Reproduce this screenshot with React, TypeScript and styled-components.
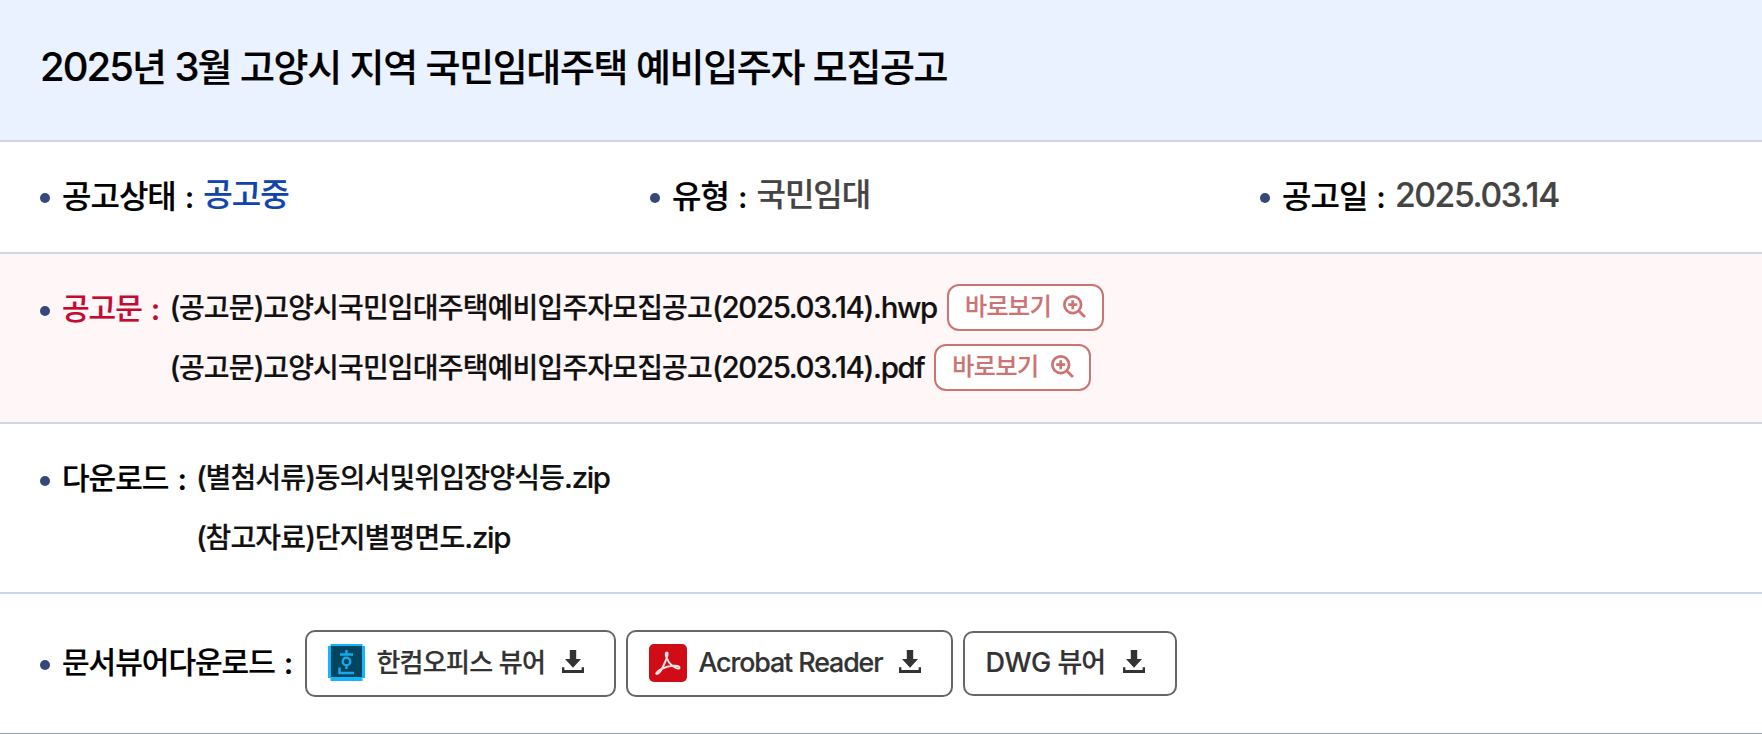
import { ReactNode } from "react";
import styled, { createGlobalStyle, css } from "styled-components";

const GlobalStyle = createGlobalStyle`
    * {
        box-sizing: border-box;
    }
    body {
        margin: 0;
        overflow: hidden;
        background: #fff;
        font-family: Inter, "Noto Sans CJK KR", sans-serif;
        font-weight: 500;
        color: #000;
    }
`;

const Notice = styled.main`
    width: 100%;
    height: 734px;
    border-bottom: 1px solid #8f9fb8;
`;

const TitleBar = styled.header`
    display: flex;
    align-items: center;
    height: 142px;
    padding: 0 40px 6px;
    background: #eaf1ff;
    border-bottom: 2px solid #cbd7e8;
`;

const Row = styled.section<{ $height: number; $tinted?: boolean; $last?: boolean }>`
    display: flex;
    align-items: flex-start;
    height: ${(p) => p.$height}px;
    padding-left: 40px;
    background: ${(p) => (p.$tinted ? "#fff6f7" : "#fff")};
    border-bottom: ${(p) => (p.$last ? "none" : "2px solid #cbd7e8")};
`;

const Field = styled.div`
    display: flex;
    align-items: center;
    flex: 0 0 610px;
    height: 110px;

    &:last-child {
        flex: 1 1 0;
    }
`;

const Bullet = styled.i<{ $top?: number }>`
    flex: none;
    width: 10px;
    height: 10px;
    margin: ${(p) => p.$top ?? 0}px 12px 0 0;
    border-radius: 50%;
    background: #34487c;
`;

/* 한글과 영문/숫자의 크기와 자간을 따로 준다 */
type TextStyle = "title" | "field" | "label" | "file" | "view" | "viewer" | "dwg";

const sizes: Record<TextStyle, { size: number; ko: number; en: number; enScale: number }> = {
    title: { size: 38, ko: -1.35, en: -1.9, enScale: 1.05 },
    field: { size: 32, ko: -1, en: -1.35, enScale: 1.05 },
    label: { size: 30, ko: -1, en: -1, enScale: 1 },
    file: { size: 28, ko: -0.83, en: -1.32, enScale: 1.05 },
    view: { size: 24, ko: -0.5, en: -0.5, enScale: 1 },
    viewer: { size: 26, ko: -0.7, en: -1.1, enScale: 1.03 },
    dwg: { size: 27, ko: -0.9, en: -0.2, enScale: 1 },
};

const Line = styled.span<{ $kind: TextStyle; $color?: string; $shift?: number }>`
    flex: none;
    margin-top: ${(p) => p.$shift ?? 0}px;
    white-space: pre;
    line-height: 60px;
    color: ${(p) => p.$color ?? "inherit"};
    -webkit-text-stroke: 0.2px currentColor;
    ${({ $kind }) => css`
        font-size: ${sizes[$kind].size}px;
        letter-spacing: ${sizes[$kind].ko}px;
    `}
`;

const Latin = styled.span<{ $kind: TextStyle }>`
    && {
        line-height: 1;
    }
    ${({ $kind }) => css`
        font-size: ${sizes[$kind].enScale}em;
        letter-spacing: ${sizes[$kind].en}px;
    `}
`;

interface TextProps {
    kind: TextStyle;
    color?: string;
    shift?: number;
    children: string;
}

function Text({ kind, color, shift, children }: TextProps) {
    const runs = children.split(/([A-Za-z0-9.()]+)/);
    return (
        <Line $kind={kind} $color={color} $shift={shift}>
            {runs.map((run, i) =>
                i % 2 ? (
                    <Latin key={i} $kind={kind}>
                        {run}
                    </Latin>
                ) : (
                    run
                )
            )}
        </Line>
    );
}

const Colon = styled.span<{ $top?: number; $after?: number; $color?: string }>`
    flex: none;
    margin: ${(p) => p.$top ?? 0}px ${(p) => p.$after ?? 9}px 0 9px;
    font-size: 30px;
    font-weight: 600;
    line-height: 60px;
    color: ${(p) => p.$color ?? "inherit"};
`;

const FileList = styled.ul`
    margin: 24px 0 0;
    padding: 0;
    list-style: none;
`;

const FileItem = styled.li`
    display: flex;
    align-items: center;
    height: 60px;
    color: #111;
`;

const ViewButton = styled.button`
    display: flex;
    align-items: center;
    width: 157px;
    height: 47px;
    margin: 0 0 1px 10px;
    padding: 0 0 2px 16px;
    gap: 12px;
    border: 2px solid #cd7372;
    border-radius: 12px;
    background: #fff;
    color: #cd7372;
    font: inherit;
    cursor: pointer;

    span {
        line-height: 40px;
    }
`;

const ViewerButton = styled.button<{ $width: number; $height?: number; $left?: number }>`
    display: flex;
    align-items: center;
    width: ${(p) => p.$width}px;
    height: ${(p) => p.$height ?? 67}px;
    padding: 0 30px 2px ${(p) => p.$left ?? 21}px;
    border: 2px solid #666;
    border-radius: 10px;
    background: #fff;
    color: #333;
    font: inherit;
    cursor: pointer;

    span {
        line-height: 50px;
    }
    svg + span {
        margin-left: 11px;
    }
    svg:last-child {
        margin: 0 0 2px auto;
    }
`;

const ViewerList = styled.div`
    display: flex;
    align-items: center;
    gap: 10px;
    height: 67px;
    margin-top: 36px;
`;

const ZoomIcon = () => (
    <svg width="23" height="23" viewBox="0 0 22 22" fill="none" stroke="currentColor" strokeWidth="2.6">
        <circle cx="9.3" cy="9.3" r="8" />
        <path d="M15 15l6 6M9.3 5v8.6M5 9.3h8.6" />
    </svg>
);

const DownloadIcon = () => (
    <svg width="22" height="23" viewBox="0 0 22 23" fill="currentColor">
        <path d="M7.8 0h6.4v9H19l-8 8.700L3 9h4.800z" />
        <path d="M0 17.300h2.400v2.700h17.200v-2.700H22V23H0z" />
    </svg>
);

const HancomIcon = () => (
    <svg width="37" height="37" viewBox="0 0 37 37">
        <path d="M2.5 0h32v2H37v32h-2.5v3h-32v-3H0V2h2.5z" fill="#14b4ff" />
        <path d="M3 2h31v31H3z" fill="#03455f" />
        <g fill="none" stroke="#14a9ec" strokeWidth="2.4">
            <path d="M18.5 6v4M12 10.500h13M11.500 23.500v5.500h14.500M18.500 22v3" />
            <circle cx="18.5" cy="17.5" r="3.8" />
        </g>
    </svg>
);

const AcrobatIcon = () => (
    <svg width="38" height="38" viewBox="0 0 38 38">
        <rect width="38" height="38" rx="5" fill="#d00d16" />
        <path
            d="M18 8.500c-3 0 0 9 5 13 4 3 7.500 4 7.500 2 0-3-11-2-17 1-5.500 3-7.500 5.500-5.500 5.500 4 0 13-21.500 10-21.500z"
            fill="none"
            stroke="#ffe3e4"
            strokeWidth="2"
        />
    </svg>
);

interface FieldItemProps {
    label: string;
    children: ReactNode;
}

function FieldItem({ label, children }: FieldItemProps) {
    return (
        <Field>
            <Bullet $top={2} />
            <Text kind="field">{label}</Text>
            <Colon>:</Colon>
            {children}
        </Field>
    );
}

const notices = [
    "(공고문)고양시국민임대주택예비입주자모집공고(2025.03.14).hwp",
    "(공고문)고양시국민임대주택예비입주자모집공고(2025.03.14).pdf",
];
const downloads = ["(별첨서류)동의서및위임장양식등.zip", "(참고자료)단지별평면도.zip"];

/**
 * @description 임대주택 모집공고 상세 정보
 */
function App() {
    return (
        <Notice>
            <GlobalStyle />
            <TitleBar>
                <Text kind="title">2025년 3월 고양시 지역 국민임대주택 예비입주자 모집공고</Text>
            </TitleBar>
            <Row $height={112}>
                <FieldItem label="공고상태">
                    <Text kind="field" color="#1144ad" shift={-4}>
                        공고중
                    </Text>
                </FieldItem>
                <FieldItem label="유형">
                    <Text kind="field" color="#444" shift={-4}>
                        국민임대
                    </Text>
                </FieldItem>
                <FieldItem label="공고일">
                    <Text kind="field" color="#444" shift={-3}>
                        2025.03.14
                    </Text>
                </FieldItem>
            </Row>
            <Row $height={170} $tinted>
                <Bullet $top={52} />
                <Text kind="label" color="#c40a31" shift={24}>
                    공고문
                </Text>
                <Colon $top={25} $color="#c40a31">
                    :
                </Colon>
                <FileList>
                    {notices.map((name) => (
                        <FileItem key={name}>
                            <Text kind="file">{name}</Text>
                            <ViewButton>
                                <Text kind="view">바로보기</Text>
                                <ZoomIcon />
                            </ViewButton>
                        </FileItem>
                    ))}
                </FileList>
            </Row>
            <Row $height={170}>
                <Bullet $top={52} />
                <Text kind="label" shift={24}>
                    다운로드
                </Text>
                <Colon $top={25}>:</Colon>
                <FileList>
                    {downloads.map((name) => (
                        <FileItem key={name}>
                            <Text kind="file">{name}</Text>
                        </FileItem>
                    ))}
                </FileList>
            </Row>
            <Row $height={139} $last>
                <Bullet $top={66} />
                <Text kind="label" shift={38}>
                    문서뷰어다운로드
                </Text>
                <Colon $top={39} $after={12}>
                    :
                </Colon>
                <ViewerList>
                    <ViewerButton $width={311}>
                        <HancomIcon />
                        <Text kind="viewer">한컴오피스 뷰어</Text>
                        <DownloadIcon />
                    </ViewerButton>
                    <ViewerButton $width={327}>
                        <AcrobatIcon />
                        <Text kind="viewer">Acrobat Reader</Text>
                        <DownloadIcon />
                    </ViewerButton>
                    <ViewerButton $width={214} $height={65} $left={20}>
                        <Text kind="dwg">DWG 뷰어</Text>
                        <DownloadIcon />
                    </ViewerButton>
                </ViewerList>
            </Row>
        </Notice>
    );
}

export default App;
